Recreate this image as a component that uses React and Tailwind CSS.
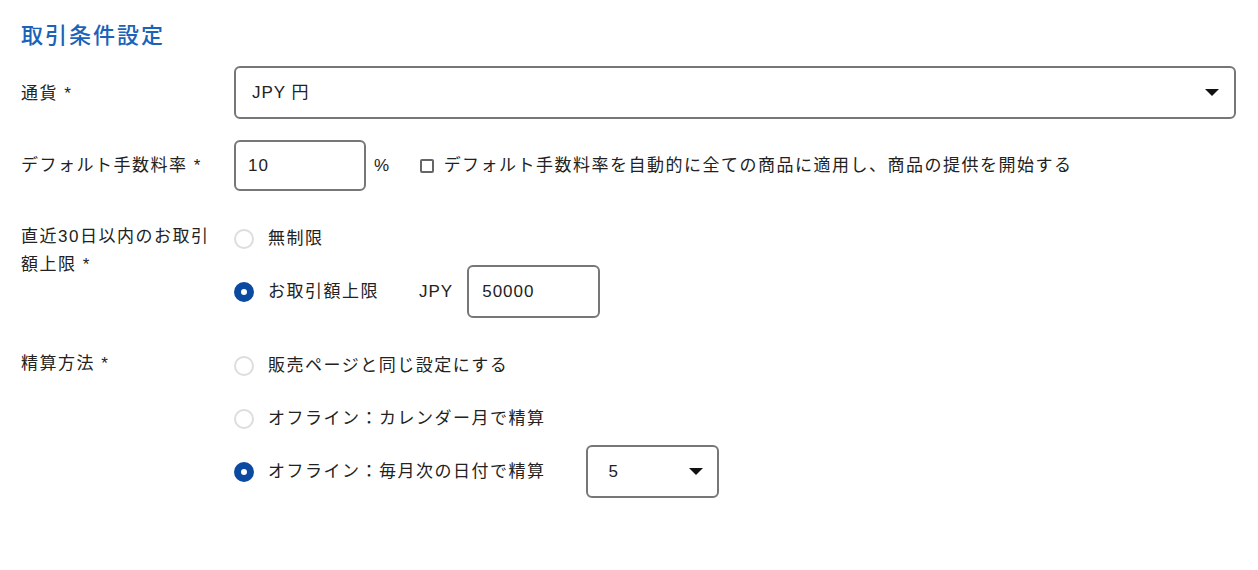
import React, { useState } from "react";

const Radio = ({ checked }) => (
  <span
    className={`w-5 h-5 rounded-full shrink-0 bg-white ${
      checked ? "border-[7px] border-[#0b4aa0]" : "border-2 border-[#dddddd]"
    }`}
  ></span>
);

const Caret = () => (
  <svg width="14" height="7" viewBox="0 0 14 7" className="shrink-0">
    <path d="M0 0 L14 0 L7 7 Z" fill="#111" />
  </svg>
);

const App = () => {
  const [limit, setLimit] = useState(1);
  const [settle, setSettle] = useState(2);

  return (
    <div
      className="w-full min-h-screen bg-white text-[#222] text-[17px] tracking-[1.5px] pl-[21px] pr-[22px] pt-[20px]"
      style={{ fontFamily: '"Liberation Sans", "Noto Sans CJK JP", sans-serif' }}
    >
      <h1 className="text-[22px] leading-[32px] tracking-[2px] font-medium text-[#1a63b8]">
        取引条件設定
      </h1>

      <div className="grid grid-cols-[213px_1fr] gap-y-[21px] mt-[14px]">
        {/* 通貨 */}
        <div className="flex items-center pt-[2px]">通貨 *</div>
        <div className="h-[53px] border-2 border-[#777] rounded-md flex items-center justify-between pl-4 pr-[15px]">
          <span className="tracking-[1px]">JPY 円</span>
          <Caret />
        </div>

        {/* デフォルト手数料率 */}
        <div className="flex items-center">デフォルト手数料率 *</div>
        <div className="flex items-center">
          <div className="w-[132px] h-[51px] border-2 border-[#777] rounded-md flex items-center pl-3 tracking-[1px]">
            10
          </div>
          <span className="ml-2">%</span>
          <span className="w-[14px] h-[14px] border-2 border-[#666] rounded-[2px] ml-[29px] mr-[10px]"></span>
          <span>デフォルト手数料率を自動的に全ての商品に適用し、商品の提供を開始する</span>
        </div>

        {/* 直近30日以内のお取引額上限 */}
        <div className="pt-[11px] leading-[28px] pr-2">直近30日以内のお取引額上限 *</div>
        <div className="flex flex-col">
          <div className="h-[53px] flex items-center gap-[14px]" onClick={() => setLimit(0)}>
            <Radio checked={limit === 0} />
            <span>無制限</span>
          </div>
          <div className="h-[53px] flex items-center" onClick={() => setLimit(1)}>
            <Radio checked={limit === 1} />
            <span className="ml-[14px]">お取引額上限</span>
            <span className="ml-[40px] tracking-[1px]">JPY</span>
            <div className="w-[133px] h-[53px] border-2 border-[#777] rounded-md flex items-center pl-[13px] ml-[14px] tracking-[1px]">
              50000
            </div>
          </div>
        </div>

        {/* 精算方法 */}
        <div className="pt-[11px] leading-[28px]">精算方法 *</div>
        <div className="flex flex-col">
          <div className="h-[53px] flex items-center gap-[14px]" onClick={() => setSettle(0)}>
            <Radio checked={settle === 0} />
            <span>販売ページと同じ設定にする</span>
          </div>
          <div className="h-[53px] flex items-center gap-[14px]" onClick={() => setSettle(1)}>
            <Radio checked={settle === 1} />
            <span>オフライン：カレンダー月で精算</span>
          </div>
          <div className="h-[53px] flex items-center" onClick={() => setSettle(2)}>
            <Radio checked={settle === 2} />
            <span className="ml-[14px]">オフライン：毎月次の日付で精算</span>
            <div className="w-[133px] h-[53px] border-2 border-[#777] rounded-md flex items-center justify-between pl-[21px] pr-[14px] ml-[40px]">
              <span>5</span>
              <Caret />
            </div>
          </div>
        </div>
      </div>
    </div>
  );
};

export default App;
